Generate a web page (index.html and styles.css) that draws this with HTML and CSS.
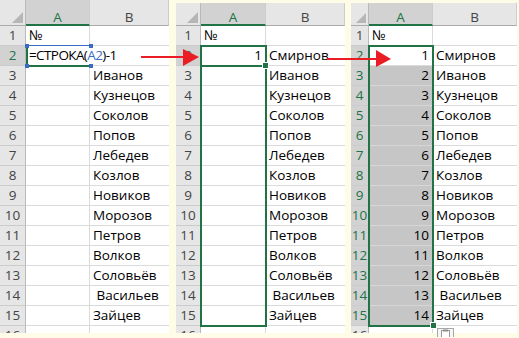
FILE: index.html
```html
<!DOCTYPE html>
<html lang="ru">
<head>
<meta charset="utf-8">
<title>СТРОКА</title>
<link rel="stylesheet" href="styles.css">
</head>
<body>
<div class="page">
  <div class="panel p1">
    <div class="sheet">
      <div class="row hdr"><div class="cell rh corner"></div><div class="cell a hsel">A</div><div class="cell b">B</div></div>
      <div class="row"><div class="cell rh">1</div><div class="cell a">№</div><div class="cell b"></div></div>
      <div class="row"><div class="cell rh rsel">2</div><div class="cell a edit">=СТРОКА(<span class="ref">A2</span>)-1</div><div class="cell b nogrid"></div></div>
      <div class="row"><div class="cell rh">3</div><div class="cell a"></div><div class="cell b">Иванов</div></div>
      <div class="row"><div class="cell rh">4</div><div class="cell a"></div><div class="cell b">Кузнецов</div></div>
      <div class="row"><div class="cell rh">5</div><div class="cell a"></div><div class="cell b">Соколов</div></div>
      <div class="row"><div class="cell rh">6</div><div class="cell a"></div><div class="cell b">Попов</div></div>
      <div class="row"><div class="cell rh">7</div><div class="cell a"></div><div class="cell b">Лебедев</div></div>
      <div class="row"><div class="cell rh">8</div><div class="cell a"></div><div class="cell b">Козлов</div></div>
      <div class="row"><div class="cell rh">9</div><div class="cell a"></div><div class="cell b">Новиков</div></div>
      <div class="row"><div class="cell rh">10</div><div class="cell a"></div><div class="cell b">Морозов</div></div>
      <div class="row"><div class="cell rh">11</div><div class="cell a"></div><div class="cell b">Петров</div></div>
      <div class="row"><div class="cell rh">12</div><div class="cell a"></div><div class="cell b">Волков</div></div>
      <div class="row"><div class="cell rh">13</div><div class="cell a"></div><div class="cell b">Соловьёв</div></div>
      <div class="row"><div class="cell rh">14</div><div class="cell a"></div><div class="cell b"> Васильев</div></div>
      <div class="row"><div class="cell rh">15</div><div class="cell a"></div><div class="cell b">Зайцев</div></div>
      <div class="row"><div class="cell rh">16</div><div class="cell a"></div><div class="cell b"></div></div>
    </div>
    <div class="active edit-box"><i class="k tl"></i><i class="k tr"></i><i class="k bl"></i><i class="k br"></i></div>
  </div>

  <div class="panel p2">
    <div class="sheet">
      <div class="row hdr"><div class="cell rh corner"></div><div class="cell a hsel">A</div><div class="cell b">B</div></div>
      <div class="row"><div class="cell rh">1</div><div class="cell a">№</div><div class="cell b"></div></div>
      <div class="row"><div class="cell rh rsel">2</div><div class="cell a num">1</div><div class="cell b">Смирнов</div></div>
      <div class="row"><div class="cell rh">3</div><div class="cell a"></div><div class="cell b">Иванов</div></div>
      <div class="row"><div class="cell rh">4</div><div class="cell a"></div><div class="cell b">Кузнецов</div></div>
      <div class="row"><div class="cell rh">5</div><div class="cell a"></div><div class="cell b">Соколов</div></div>
      <div class="row"><div class="cell rh">6</div><div class="cell a"></div><div class="cell b">Попов</div></div>
      <div class="row"><div class="cell rh">7</div><div class="cell a"></div><div class="cell b">Лебедев</div></div>
      <div class="row"><div class="cell rh">8</div><div class="cell a"></div><div class="cell b">Козлов</div></div>
      <div class="row"><div class="cell rh">9</div><div class="cell a"></div><div class="cell b">Новиков</div></div>
      <div class="row"><div class="cell rh">10</div><div class="cell a"></div><div class="cell b">Морозов</div></div>
      <div class="row"><div class="cell rh">11</div><div class="cell a"></div><div class="cell b">Петров</div></div>
      <div class="row"><div class="cell rh">12</div><div class="cell a"></div><div class="cell b">Волков</div></div>
      <div class="row"><div class="cell rh">13</div><div class="cell a"></div><div class="cell b">Соловьёв</div></div>
      <div class="row"><div class="cell rh">14</div><div class="cell a"></div><div class="cell b"> Васильев</div></div>
      <div class="row"><div class="cell rh">15</div><div class="cell a"></div><div class="cell b">Зайцев</div></div>
      <div class="row"><div class="cell rh">16</div><div class="cell a"></div><div class="cell b"></div></div>
    </div>
    <div class="active a2box"></div>
    <div class="active range"></div>
    <div class="handle h2"></div>
  </div>

  <div class="panel p3">
    <div class="sheet">
      <div class="row hdr"><div class="cell rh corner"></div><div class="cell a hsel">A</div><div class="cell b">B</div></div>
      <div class="row"><div class="cell rh">1</div><div class="cell a">№</div><div class="cell b"></div></div>
      <div class="row"><div class="cell rh rsel">2</div><div class="cell a num">1</div><div class="cell b">Смирнов</div></div>
      <div class="row"><div class="cell rh rsel">3</div><div class="cell a num fill">2</div><div class="cell b">Иванов</div></div>
      <div class="row"><div class="cell rh rsel">4</div><div class="cell a num fill">3</div><div class="cell b">Кузнецов</div></div>
      <div class="row"><div class="cell rh rsel">5</div><div class="cell a num fill">4</div><div class="cell b">Соколов</div></div>
      <div class="row"><div class="cell rh rsel">6</div><div class="cell a num fill">5</div><div class="cell b">Попов</div></div>
      <div class="row"><div class="cell rh rsel">7</div><div class="cell a num fill">6</div><div class="cell b">Лебедев</div></div>
      <div class="row"><div class="cell rh rsel">8</div><div class="cell a num fill">7</div><div class="cell b">Козлов</div></div>
      <div class="row"><div class="cell rh rsel">9</div><div class="cell a num fill">8</div><div class="cell b">Новиков</div></div>
      <div class="row"><div class="cell rh rsel">10</div><div class="cell a num fill">9</div><div class="cell b">Морозов</div></div>
      <div class="row"><div class="cell rh rsel">11</div><div class="cell a num fill">10</div><div class="cell b">Петров</div></div>
      <div class="row"><div class="cell rh rsel">12</div><div class="cell a num fill">11</div><div class="cell b">Волков</div></div>
      <div class="row"><div class="cell rh rsel">13</div><div class="cell a num fill">12</div><div class="cell b">Соловьёв</div></div>
      <div class="row"><div class="cell rh rsel">14</div><div class="cell a num fill">13</div><div class="cell b"> Васильев</div></div>
      <div class="row"><div class="cell rh rsel">15</div><div class="cell a num fill">14</div><div class="cell b">Зайцев</div></div>
      <div class="row"><div class="cell rh">16</div><div class="cell a"></div><div class="cell b"></div></div>
    </div>
    <div class="active range"></div>
    <div class="handle h3"></div>
    <div class="paste">
      <svg width="17" height="9" viewBox="0 0 17 9"><rect x="0.5" y="0.5" width="16" height="10" fill="#f6f6f6" stroke="#a8a8a8"/><rect x="4.5" y="2.5" width="8" height="8" fill="#fff" stroke="#9a9a9a"/><rect x="6" y="1.5" width="5" height="2" fill="#8c8c8c"/></svg>
    </div>
  </div>
</div>

<svg class="arrows" width="519" height="338" viewBox="0 0 519 338">
  <line x1="141" y1="57" x2="186" y2="57" stroke="#ea1c24" stroke-width="2"/>
  <polygon points="183,49 199,57 183,66" fill="#ea1c24"/>
  <line x1="327" y1="59" x2="378" y2="59" stroke="#ea1c24" stroke-width="2"/>
  <polygon points="376,50 391,59 376,67" fill="#ea1c24"/>
</svg>
</body>
</html>
```

FILE: styles.css
```css
* { box-sizing: border-box; }

body {
  margin: 0;
  width: 519px;
  height: 338px;
  overflow: hidden;
  position: relative;
  background: #fefbe6;
  font-family: "Open Sans", "Liberation Sans", sans-serif;
  font-size: 13.5px;
  color: #000;
}

.page {
  display: flex;
  align-items: flex-start;
}

.panel {
  position: relative;
  flex: none;
}

.p1 { width: 169px; margin-right: 7px; }
.p2 { width: 169px; margin-top: 3px; margin-right: 6px; }
.p3 { width: 166px; margin-top: 3px; }

.sheet {
  overflow: hidden;
  background: #fff;
}
.p1 .sheet { height: 333px; }
.p2 .sheet, .p3 .sheet { height: 330px; }

.row {
  display: flex;
  height: 20px;
}

.cell {
  flex: none;
  height: 100%;
  padding: 0 3px;
  border-bottom: 1px solid #dadada;
  white-space: pre;
  line-height: 19px;
  overflow: hidden;
}

.a { border-right: 1px solid #dadada; }
.num { text-align: right; padding-right: 3px; }
.fill { background: #c6c6c6; border-bottom-color: #d6d6d6; }

.edit {
  overflow: visible;
  position: relative;
  z-index: 1;
  border-right-color: transparent;
  background: #fff;
  letter-spacing: -0.6px;
}
.ref { color: #3a6cc4; }

.rh {
  background: #e6e6e6;
  border-right: 1px solid #b9b9b9;
  border-bottom-color: #cbcbcb;
  text-align: center;
  color: #444;
  padding: 0;
}
.rsel { background: #d2d2d2; color: #217346; }

.p1 .rh { width: 26px; }
.p1 .a { width: 64px; }
.p1 .b { width: 79px; }
.p2 .rh { width: 25px; }
.p2 .a { width: 65px; }
.p2 .b { width: 79px; }
.p3 .rh { width: 18px; }
.p3 .a { width: 64px; }
.p3 .b { width: 84px; }

.hdr .cell {
  background: #e6e6e6;
  border-bottom: 1px solid #ababab;
  border-right: 1px solid #cdcdcd;
  text-align: center;
  color: #444;
  line-height: 20px;
}
.p1 .hdr { height: 26px; }
.p1 .hdr .cell { padding-top: 7px; }
.p2 .hdr, .p3 .hdr { height: 23px; }
.p2 .hdr .cell, .p3 .hdr .cell { padding-top: 4px; }

.hdr .hsel {
  background: #d2d2d2;
  color: #217346;
  border-bottom: 2px solid #217346;
}

.hdr .corner {
  display: flex;
  justify-content: flex-end;
  align-items: flex-end;
  padding: 0 2px 2px 0;
  border-right-color: #b9b9b9;
}
.corner::after {
  content: "";
  width: 0;
  height: 0;
  border-left: 11px solid transparent;
  border-bottom: 11px solid #b6b6b6;
}
.p3 .corner::after {
  border-left-width: 10px;
  border-bottom-width: 10px;
}

/* selection overlays */
.active {
  position: absolute;
  border: 2px solid #217346;
  z-index: 2;
}
.edit-box {
  left: 26px;
  top: 45px;
  width: 65px;
  height: 22px;
  border-right: none;
  border-top: 1px solid #3a6cc4;
}
.k {
  position: absolute;
  width: 4px;
  height: 4px;
  background: #3a6cc4;
}
.k.tl { left: -3px; top: -2px; }
.k.tr { right: -2px; top: -2px; }
.k.bl { left: -3px; bottom: -3px; }
.k.br { right: -2px; bottom: -3px; }

.p2 .a2box { left: 24px; top: 42px; width: 67px; height: 22px; }
.p2 .range { left: 24px; top: 42px; width: 67px; height: 282px; }
.p3 .range { left: 17px; top: 42px; width: 66px; height: 282px; }

.handle {
  position: absolute;
  width: 7px;
  height: 7px;
  background: #217346;
  border: 1px solid #fff;
  z-index: 3;
}
.h2 { left: 86px; top: 59px; }
.h3 { left: 79px; top: 319px; }

.paste {
  position: absolute;
  left: 86px;
  top: 325px;
  width: 17px;
  height: 9px;
  display: flex;
}

.arrows {
  position: absolute;
  left: 0;
  top: 0;
  pointer-events: none;
  z-index: 5;
}
```
